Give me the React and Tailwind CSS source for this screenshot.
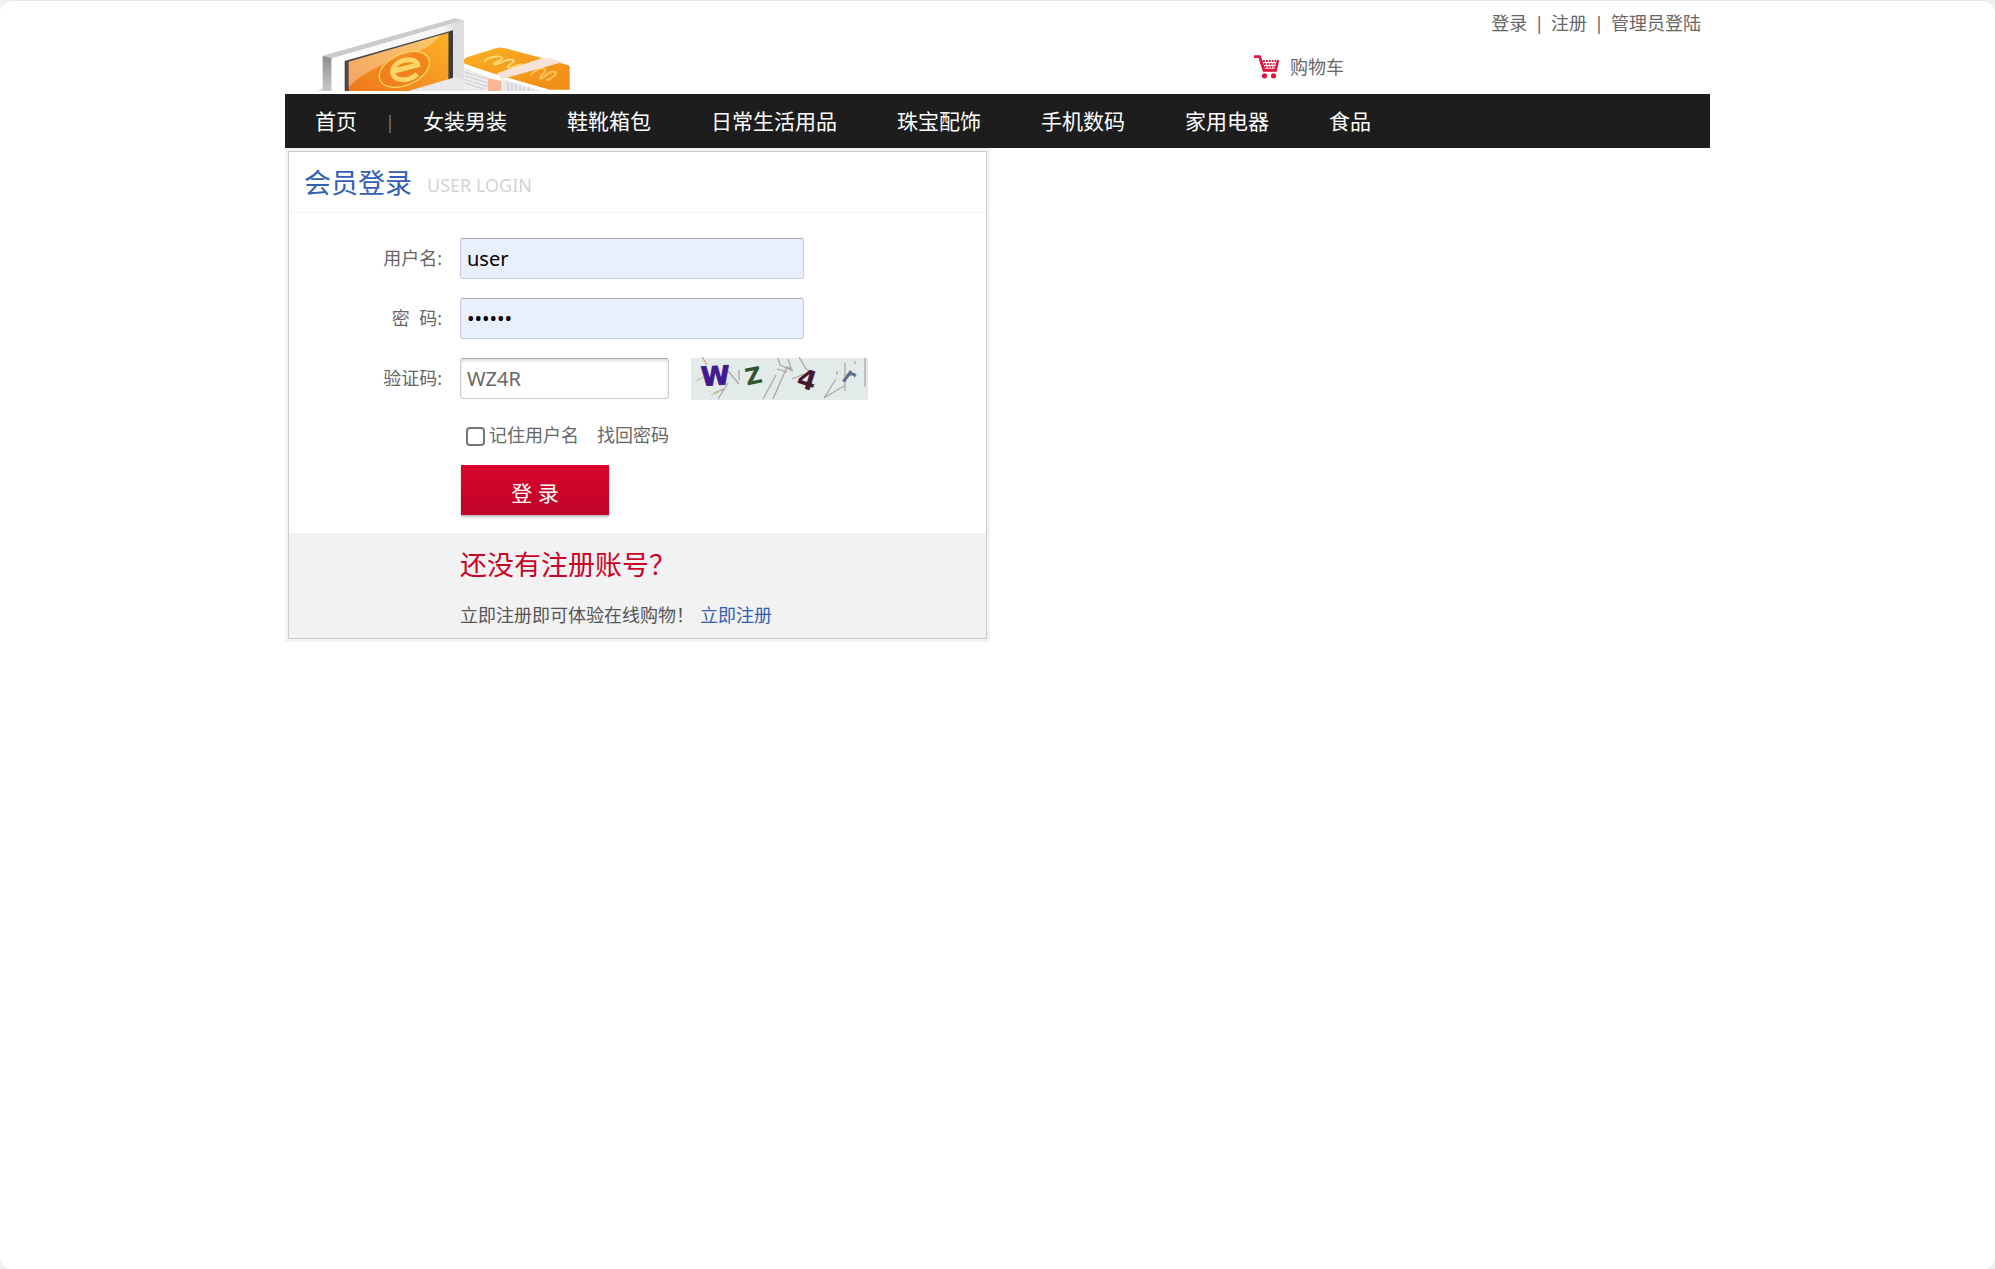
const categories = ['女装男装', '鞋靴箱包', '日常生活用品', '珠宝配饰', '手机数码', '家用电器', '食品']

function Logo() {
  return (
    <svg viewBox="15 0 855 273" className="w-[285px] h-[91px]" role="img" aria-label="logo">
      <defs>
        <linearGradient id="screen" x1="0" y1="1" x2="1" y2="0">
          <stop offset="0" stopColor="#f0761c" />
          <stop offset="1" stopColor="#fbb425" />
        </linearGradient>
        <linearGradient id="side" x1="0" y1="0" x2="0" y2="1">
          <stop offset="0" stopColor="#8d8d8d" />
          <stop offset="1" stopColor="#c9c9c9" />
        </linearGradient>
        <linearGradient id="bill" x1="0" y1="0" x2="1" y2="1">
          <stop offset="0" stopColor="#fbb022" />
          <stop offset="1" stopColor="#f08a16" />
        </linearGradient>
        <linearGradient id="frame" x1="0" y1="0" x2="1" y2="0">
          <stop offset="0" stopColor="#ffffff" />
          <stop offset="0.85" stopColor="#f4f4f4" />
          <stop offset="1" stopColor="#cfcfd2" />
        </linearGradient>
      </defs>
      <path d="M110 273l18-8h30v8z" fill="#ddd" />
      <path d="M128 167L525 55l26 6-396 116z" fill="#cbcbcb" />
      <path d="M128 167l27 8v98h-27z" fill="url(#side)" />
      <path d="M155 175L551 61v186l-70 26H155z" fill="url(#frame)" />
      <path d="M519 85l32-24v186l-32-6z" fill="#dedee1" />
      <path d="M194 183L519 91v152l-100 30H194z" fill="#4b4747" />
      <path d="M206 185l300-87v142l-112 33H206z" fill="url(#screen)" />
      <path d="M206 185l274-80c-50 76-180 60-274 156z" fill="#fff" opacity="0.32" />
      <path d="M506 98l13-7v152l-13-3z" fill="#3f3c3c" />
      <path d="M385 273l140-41 28 8v33z" fill="#e8e8ea" />
      <ellipse cx="368" cy="209" rx="84" ry="47" transform="rotate(-24 368 209)" fill="#ee7d17" opacity="0.7" />
      <ellipse cx="373" cy="208" rx="80" ry="47" transform="rotate(-24 373 208)" fill="none" stroke="#fcd668" strokeWidth="4" />
      <path d="M343 213l70-18c-4-26-68-20-75 18-2 34 50 32 74 9" fill="none" stroke="#fbd468" strokeWidth="15" />
      <path d="M553 197l90 32 32 44H553z" fill="#ececee" />
      <path d="M553 205l82 25m-82-14l82 25m-82-14l82 25m-82-14l82 25m-82-14l60 18" stroke="#bdbdc0" strokeWidth="2" />
      <path d="M552 180Q552 174 565 170L648 145Q660 141 672 144L844 190 869 197v72H810L668 230Q640 226 552 190z" fill="url(#bill)" />
      <path d="M612 186c12-18 52-20 54-12 2 10-26 10-24 18 3 8 38-18 55-13 18 6-23 17-12 24 8 4 28-9 42-11" fill="none" stroke="#fbd773" strokeWidth="6" />
      <path d="M752 225c12-15 34-24 43-18 8 8-20 22-14 29 9 4 23-26 43-21 13 3-10 24-26 26" fill="none" stroke="#fbc45a" strokeWidth="6" />
      <path d="M552 192l120 38 138 41h-30l-112-25v27h-44v-42l-72-27z" fill="#fff" />
      <path d="M652 219l128-43q14-4 30-2l36 12-16 5-142 40-24 7z" fill="#f6e2d8" />
      <path d="M624 234l41 9v30h-41z" fill="#f9b999" />
      <path d="M668 238l120 35H668z" fill="#e8e8eb" />
      <path d="M684 246v27m12-24v24m12-20v20m12-16v16m12-12v12m14-8v8" stroke="#bbb" strokeWidth="2" />
    </svg>
  )
}

function CartIcon() {
  return (
    <svg viewBox="0 0 25 24" className="w-[25px] h-6" fill="none">
      <path d="M0 1.6h5.6L10 15h12" stroke="#e0143c" strokeWidth="2.6" />
      <path d="M6.5 5L10 15.500h11.6L24 5" stroke="#e0143c" strokeWidth="2.500" />
      <path d="M9 6h13M10 9h11.4M10.800 12h10" stroke="#e0143c" strokeWidth="1.800" strokeDasharray="1.800 1.100" />
      <circle cx="10.500" cy="20.800" r="2.600" fill="#e0143c" />
      <circle cx="19.500" cy="20.800" r="2.600" fill="#e0143c" />
    </svg>
  )
}

function Captcha() {
  return (
    <svg viewBox="0 0 177 43" className="w-[177px] h-[43px]" fontFamily="DejaVu Sans" fontWeight="bold">
      <rect y="1" width="177" height="42" fill="#e3ebea" />
      <g fill="none" stroke="#b3a5a7" strokeWidth="1.300">
        <path d="M27 42l10-16M23 36l10-4M37 14l11 13M48 13v10M72 42L85 18M82 42l14-32 6 3M87 1l2 7 13 6M86 12l10 3M97 2l4 12M108 0l7 12 9 4M101 22l12-5M133 41l12-19M133 41l20-12M154 6v28M174 1v29M146 14v4M164 4v3" />
        <path d="M11 0l5 8" stroke="#c9a37c" />
        <path d="M5 24l8-4M20 38l8-3" stroke="#b5c795" />
      </g>
      <text x="10" y="28" fontSize="26" fill="#43188f" stroke="#43188f" transform="rotate(-3 24 18)">W</text>
      <text x="54" y="27" fontSize="23" fill="#31552d" transform="rotate(-12 62 18)">Z</text>
      <text x="107" y="32" fontSize="27" fill="#44182d" transform="rotate(18 116 22)">4</text>
      <text x="152" y="27" fontSize="22" fontWeight="normal" fill="#5b6c8c" stroke="#5b6c8c" transform="rotate(36 158 22)">r</text>
    </svg>
  )
}

function Field({ id, label, children }) {
  return (
    <div className="flex items-center h-[41px]">
      <label htmlFor={id} className="w-[153px] mr-[18px] text-right whitespace-pre">{label}</label>
      {children}
    </div>
  )
}

const inputClass = 'h-[41px] px-[6px] text-[20px] rounded-[3px] border border-[#c8ccd4] border-t-[#a8acb4] outline-none'

function LoginForm() {
  return (
    <section className="w-[705px] max-w-full border-[3px] border-[#f3f3f3]">
      <div className="border border-[#ccc]">
        <div className="flex items-center h-[61px] px-[15px] pt-[2px] border-b border-[#f3f3f3]">
          <h1 className="text-[27px] text-[#3160b4]">会员登录</h1>
          <span className="ml-[15px] mt-1 text-[18px] text-[#d4d4d4]">USER LOGIN</span>
        </div>
        <form onSubmit={(e) => e.preventDefault()}>
          <div className="flex flex-col gap-[19px] pt-[25px]">
            <Field id="username" label="用户名:">
              <input id="username" type="text" defaultValue="user" className={`${inputClass} w-[344px] bg-[#e8f0fe] text-black`} />
            </Field>
            <Field id="password" label="密  码:">
              <input id="password" type="password" defaultValue="123456" className={`${inputClass} w-[344px] bg-[#e8f0fe] text-black`} />
            </Field>
            <Field id="code" label="验证码:">
              <input id="code" type="text" defaultValue="WZ4R" className={`${inputClass} w-[209px] mr-[22px] bg-white text-[#666] shadow-[inset_0_2px_3px_#ddd]`} />
              <Captcha />
            </Field>
          </div>
          <div className="flex items-center mt-[22px] pl-[177px] h-7">
            <input id="remember" type="checkbox" className="appearance-none size-[19px] mr-1 mt-[2px] rounded-[4px] border-2 border-[#767676] bg-white checked:bg-[#0075ff]" />
            <label htmlFor="remember">记住用户名</label>
            <a href="#" className="ml-[18px]">找回密码</a>
          </div>
          <button type="submit" className="block mt-4 ml-[172px] w-[148px] h-[50px] pt-2 text-[21px] text-white bg-linear-to-b from-[#d8042c] to-[#c00428] shadow-[0_2px_2px_#bbb]">
            登 录
          </button>
        </form>
        <div className="mt-[18px] pl-[171px] pt-3 pb-2 bg-[#f2f2f2]">
          <p className="text-[27px] leading-[40px] text-[#cb0329]">还没有注册账号？</p>
          <p className="mt-[15px] leading-[30px] text-[#555]">
            立即注册即可体验在线购物！
            <a href="#" className="ml-[6px] text-[#3160b4]">立即注册</a>
          </p>
        </div>
      </div>
    </section>
  )
}

export default function App() {
  return (
    <div className="bg-[#f0f0f0]">
      <div className="min-h-screen rounded-xl shadow-[inset_0_1px_0_#e8e8e8] bg-white font-['Noto_Sans','Noto_Sans_CJK_SC',sans-serif] text-[18px] text-[#666]">
        <div className="max-w-[1425px] mx-auto">
          <header className="flex justify-between pb-[3px]">
            <Logo />
            <div className="w-[456px]">
              <div className="flex justify-end gap-[7px] pt-2 pr-[9px] leading-[30px]">
                <a href="#">登录</a>
                <span>|</span>
                <a href="#">注册</a>
                <span>|</span>
                <a href="#">管理员登陆</a>
              </div>
              <a href="#" className="inline-flex items-center gap-[11px] mt-[14px] leading-[30px]">
                <CartIcon />
                购物车
              </a>
            </div>
          </header>
          <nav className="flex items-center h-[54px] pt-[2px] bg-[#1d1d1d] text-[21px] text-white">
            <a href="#" className="px-[30px]">首页</a>
            <span className="w-[6px] flex justify-center text-[18px] text-[#777]">|</span>
            {categories.map((name) => (
              <a key={name} href="#" className="px-[30px]">{name}</a>
            ))}
          </nav>
          <LoginForm />
        </div>
      </div>
    </div>
  )
}
